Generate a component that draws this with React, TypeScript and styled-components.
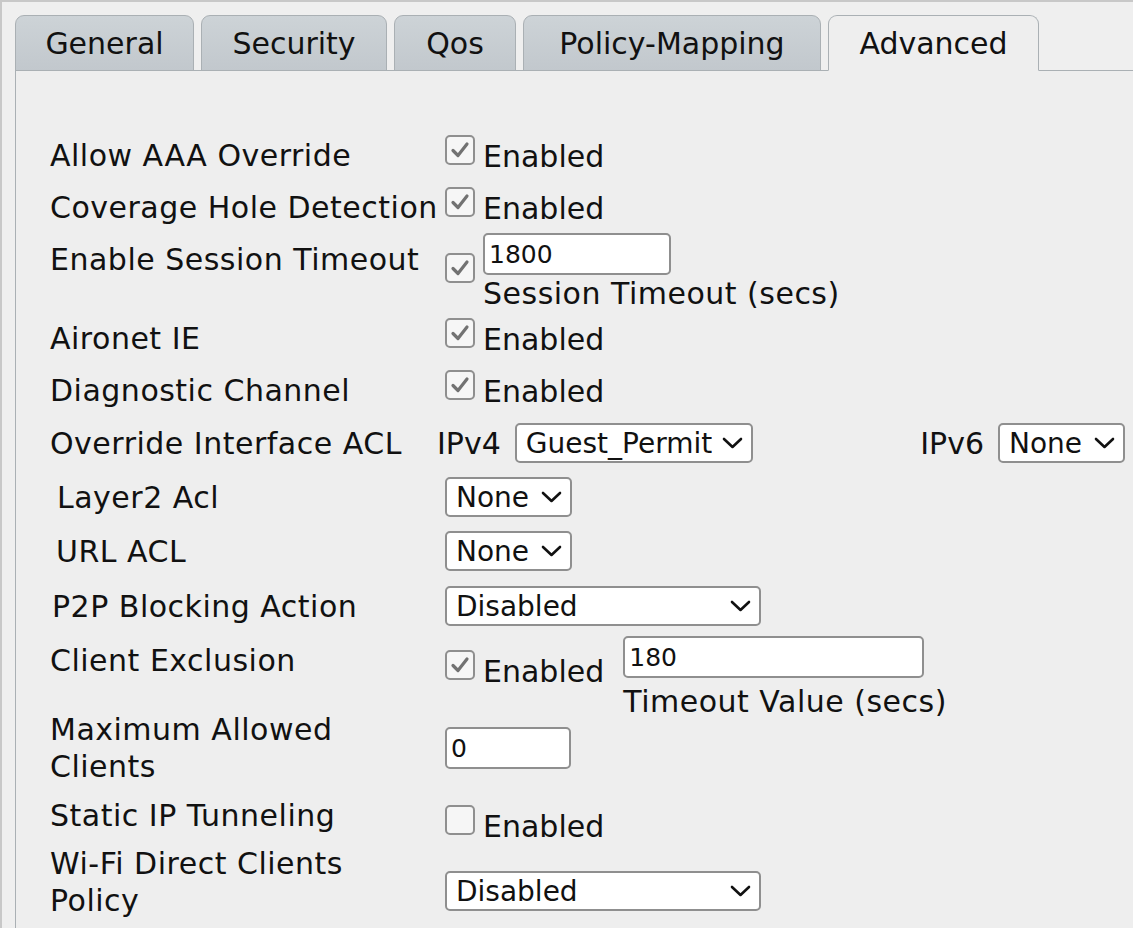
import React from 'react';
import styled, { createGlobalStyle } from 'styled-components';

const GlobalStyle = createGlobalStyle`
  html, body {
    margin: 0;
    padding: 0;
    background: #efefef;
  }
  body {
    font-family: "DejaVu Sans", "Liberation Sans", sans-serif;
    color: #111;
  }
`;

const TABS = [
  { name: 'General', width: 179 },
  { name: 'Security', width: 186 },
  { name: 'Qos', width: 122 },
  { name: 'Policy-Mapping', width: 298 },
  { name: 'Advanced', width: 211 },
];

const Chevron: React.FC = () => (
  <ChevronIcon width="21" height="12" viewBox="0 0 21 12">
    <polyline points="2,2 10.5,10 19,2" fill="none" stroke="#111" strokeWidth="2.6" strokeLinecap="round" strokeLinejoin="round" />
  </ChevronIcon>
);

const Select: React.FC<{ value: string; width: number }> = ({ value, width }) => (
  <SelectBox $w={width}>
    <SelectText>{value}</SelectText>
    <Chevron />
  </SelectBox>
);

const Check: React.FC<{ checked?: boolean }> = ({ checked }) => (
  <CheckBox>
    {checked && (
      <svg width="22" height="22" viewBox="0 0 22 22">
        <polyline points="4,11.5 9,16.5 18,5" fill="none" stroke="#727272" strokeWidth="3.2" strokeLinecap="round" strokeLinejoin="round" />
      </svg>
    )}
  </CheckBox>
);

const Enabled: React.FC<{ checked?: boolean }> = ({ checked = true }) => (
  <CheckField>
    <Check checked={checked} />
    <span>Enabled</span>
  </CheckField>
);

const App: React.FC = () => {
  return (
    <Page>
      <GlobalStyle />
      <TabBar>
        {TABS.map((t) => (
          <Tab key={t.name} $w={t.width} $active={t.name === 'Advanced'}>
            {t.name}
          </Tab>
        ))}
      </TabBar>

      <Panel>
        <Row $h={52}>
          <Label>Allow AAA Override</Label>
          <Value><Enabled /></Value>
        </Row>
        <Row $h={52}>
          <Label>Coverage Hole Detection</Label>
          <Value><Enabled /></Value>
        </Row>
        <Row $h={79}>
          <Label $self="start" $pt={8}>Enable Session Timeout</Label>
          <Value>
            <CheckField>
              <Check checked />
            </CheckField>
            <InputStack>
              <TextInput $w={188} defaultValue="1800" readOnly />
              <Caption>Session Timeout (secs)</Caption>
            </InputStack>
          </Value>
        </Row>
        <Row $h={52}>
          <Label>Aironet IE</Label>
          <Value><Enabled /></Value>
        </Row>
        <Row $h={52}>
          <Label>Diagnostic Channel</Label>
          <Value><Enabled /></Value>
        </Row>
        <Row $h={54}>
          <Label>Override Interface ACL</Label>
          <AclValue>
            <AclGroup>
              <span>IPv4</span>
              <Select value="Guest_Permit" width={238} />
            </AclGroup>
            <AclGroup>
              <span>IPv6</span>
              <Select value="None" width={127} />
            </AclGroup>
          </AclValue>
        </Row>
        <Row $h={54}>
          <Label $indent={7}>Layer2 Acl</Label>
          <Value><Select value="None" width={127} /></Value>
        </Row>
        <Row $h={54}>
          <Label $indent={6}>URL ACL</Label>
          <Value><Select value="None" width={127} /></Value>
        </Row>
        <Row $h={56}>
          <Label $indent={2}>P2P Blocking Action</Label>
          <Value><Select value="Disabled" width={316} /></Value>
        </Row>
        <Row $h={77}>
          <Label $self="start" $pt={8}>Client Exclusion</Label>
          <Value $self="start" $items="flex-start">
            <CheckSlot>
              <Enabled />
            </CheckSlot>
            <InputStack $pt={2}>
              <TextInput $w={301} defaultValue="180" readOnly />
              <Caption $mt={5}>Timeout Value (secs)</Caption>
            </InputStack>
          </Value>
        </Row>
        <Row $h={74}>
          <Label>Maximum Allowed<br />Clients</Label>
          <Value><TextInput $w={126} defaultValue="0" readOnly /></Value>
        </Row>
        <Row $h={60}>
          <Label>Static IP Tunneling</Label>
          <Value $self="start" $pt={20}><Enabled checked={false} /></Value>
        </Row>
        <Row $h={74}>
          <Label>Wi-Fi Direct Clients<br />Policy</Label>
          <Value $self="start" $pt={26}><Select value="Disabled" width={316} /></Value>
        </Row>
      </Panel>
    </Page>
  );
};

const Page = styled.div`
  display: flex;
  flex-direction: column;
  min-height: 100vh;
  box-sizing: border-box;
  padding: 13px 0 0 13px;
  border-top: 2px solid #c8c8c8;
  border-left: 2px solid #c8c8c8;
  background: #efefef;
`;

const TabBar = styled.div`
  position: relative;
  z-index: 1;
  display: flex;
  align-items: flex-end;
  gap: 7px;
  margin-bottom: -1px;
`;

const Tab = styled.div<{ $w: number; $active?: boolean }>`
  width: ${(p) => p.$w}px;
  height: 56px;
  box-sizing: border-box;
  display: flex;
  align-items: center;
  justify-content: center;
  font-size: 30px;
  color: #111;
  border: 1px solid #aab0b4;
  border-bottom-color: ${(p) => (p.$active ? '#eeeeee' : '#aab0b4')};
  border-radius: 9px 9px 0 0;
  background: ${(p) => (p.$active ? '#eeeeee' : 'linear-gradient(#cdd3d7, #c2c8cd)')};
`;

const Panel = styled.div`
  flex: 1;
  display: flex;
  flex-direction: column;
  padding: 58px 8px 0 34px;
  border-top: 1px solid #aab0b4;
  border-left: 1px solid #aab0b4;
  background: #eeeeee;
`;

const Row = styled.div<{ $h: number }>`
  display: grid;
  grid-template-columns: 395px 1fr;
  align-items: center;
  height: ${(p) => p.$h}px;
`;

const Label = styled.div<{ $indent?: number; $self?: string; $pt?: number }>`
  align-self: ${(p) => p.$self ?? 'center'};
  padding-left: ${(p) => p.$indent ?? 0}px;
  padding-top: ${(p) => p.$pt ?? 0}px;
  font-size: 30px;
  line-height: 37px;
  letter-spacing: 0.5px;
  white-space: nowrap;
`;

const Value = styled.div<{ $self?: string; $pt?: number; $items?: string }>`
  align-self: ${(p) => p.$self ?? 'center'};
  padding-top: ${(p) => p.$pt ?? 0}px;
  display: flex;
  align-items: ${(p) => p.$items ?? 'center'};
  gap: 8px;
`;

const AclValue = styled.div`
  display: flex;
  align-items: center;
  justify-content: space-between;
  margin-left: -8px;
`;

const AclGroup = styled.div`
  display: flex;
  align-items: center;
  gap: 14px;
  font-size: 30px;
  line-height: 37px;
`;

const CheckField = styled.div`
  display: inline-flex;
  align-items: flex-end;
  gap: 8px;
  font-size: 30px;
  line-height: 37px;
  white-space: nowrap;
`;

const CheckSlot = styled.div`
  padding-top: 16px;
  margin-right: 11px;
`;

const CheckBox = styled.span`
  display: inline-flex;
  align-items: center;
  justify-content: center;
  width: 30px;
  height: 30px;
  box-sizing: border-box;
  margin-bottom: 10px;
  border: 2px solid #8f8f8f;
  border-radius: 5px;
  background: #f6f6f6;
  flex-shrink: 0;
`;

const InputStack = styled.div<{ $pt?: number }>`
  display: flex;
  flex-direction: column;
  align-items: flex-start;
  padding-top: ${(p) => p.$pt ?? 0}px;
`;

const TextInput = styled.input<{ $w: number }>`
  width: ${(p) => p.$w}px;
  height: 42px;
  box-sizing: border-box;
  padding: 0 4px;
  border: 2px solid #8f8f8f;
  border-radius: 5px;
  background: #ffffff;
  font-family: inherit;
  font-size: 25px;
  color: #111;
  outline: none;
`;

const Caption = styled.div<{ $mt?: number }>`
  margin-top: ${(p) => p.$mt ?? 0}px;
  font-size: 30px;
  line-height: 37px;
  letter-spacing: 0.5px;
  white-space: nowrap;
`;

const SelectBox = styled.div<{ $w: number }>`
  width: ${(p) => p.$w}px;
  height: 40px;
  box-sizing: border-box;
  display: flex;
  align-items: center;
  justify-content: space-between;
  gap: 6px;
  padding: 0 8px 0 9px;
  border: 2px solid #8f8f8f;
  border-radius: 5px;
  background: #ffffff;
  font-size: 28px;
  color: #111;
`;

const SelectText = styled.span`
  white-space: nowrap;
  overflow: hidden;
`;

const ChevronIcon = styled.svg`
  flex-shrink: 0;
`;

export default App;
